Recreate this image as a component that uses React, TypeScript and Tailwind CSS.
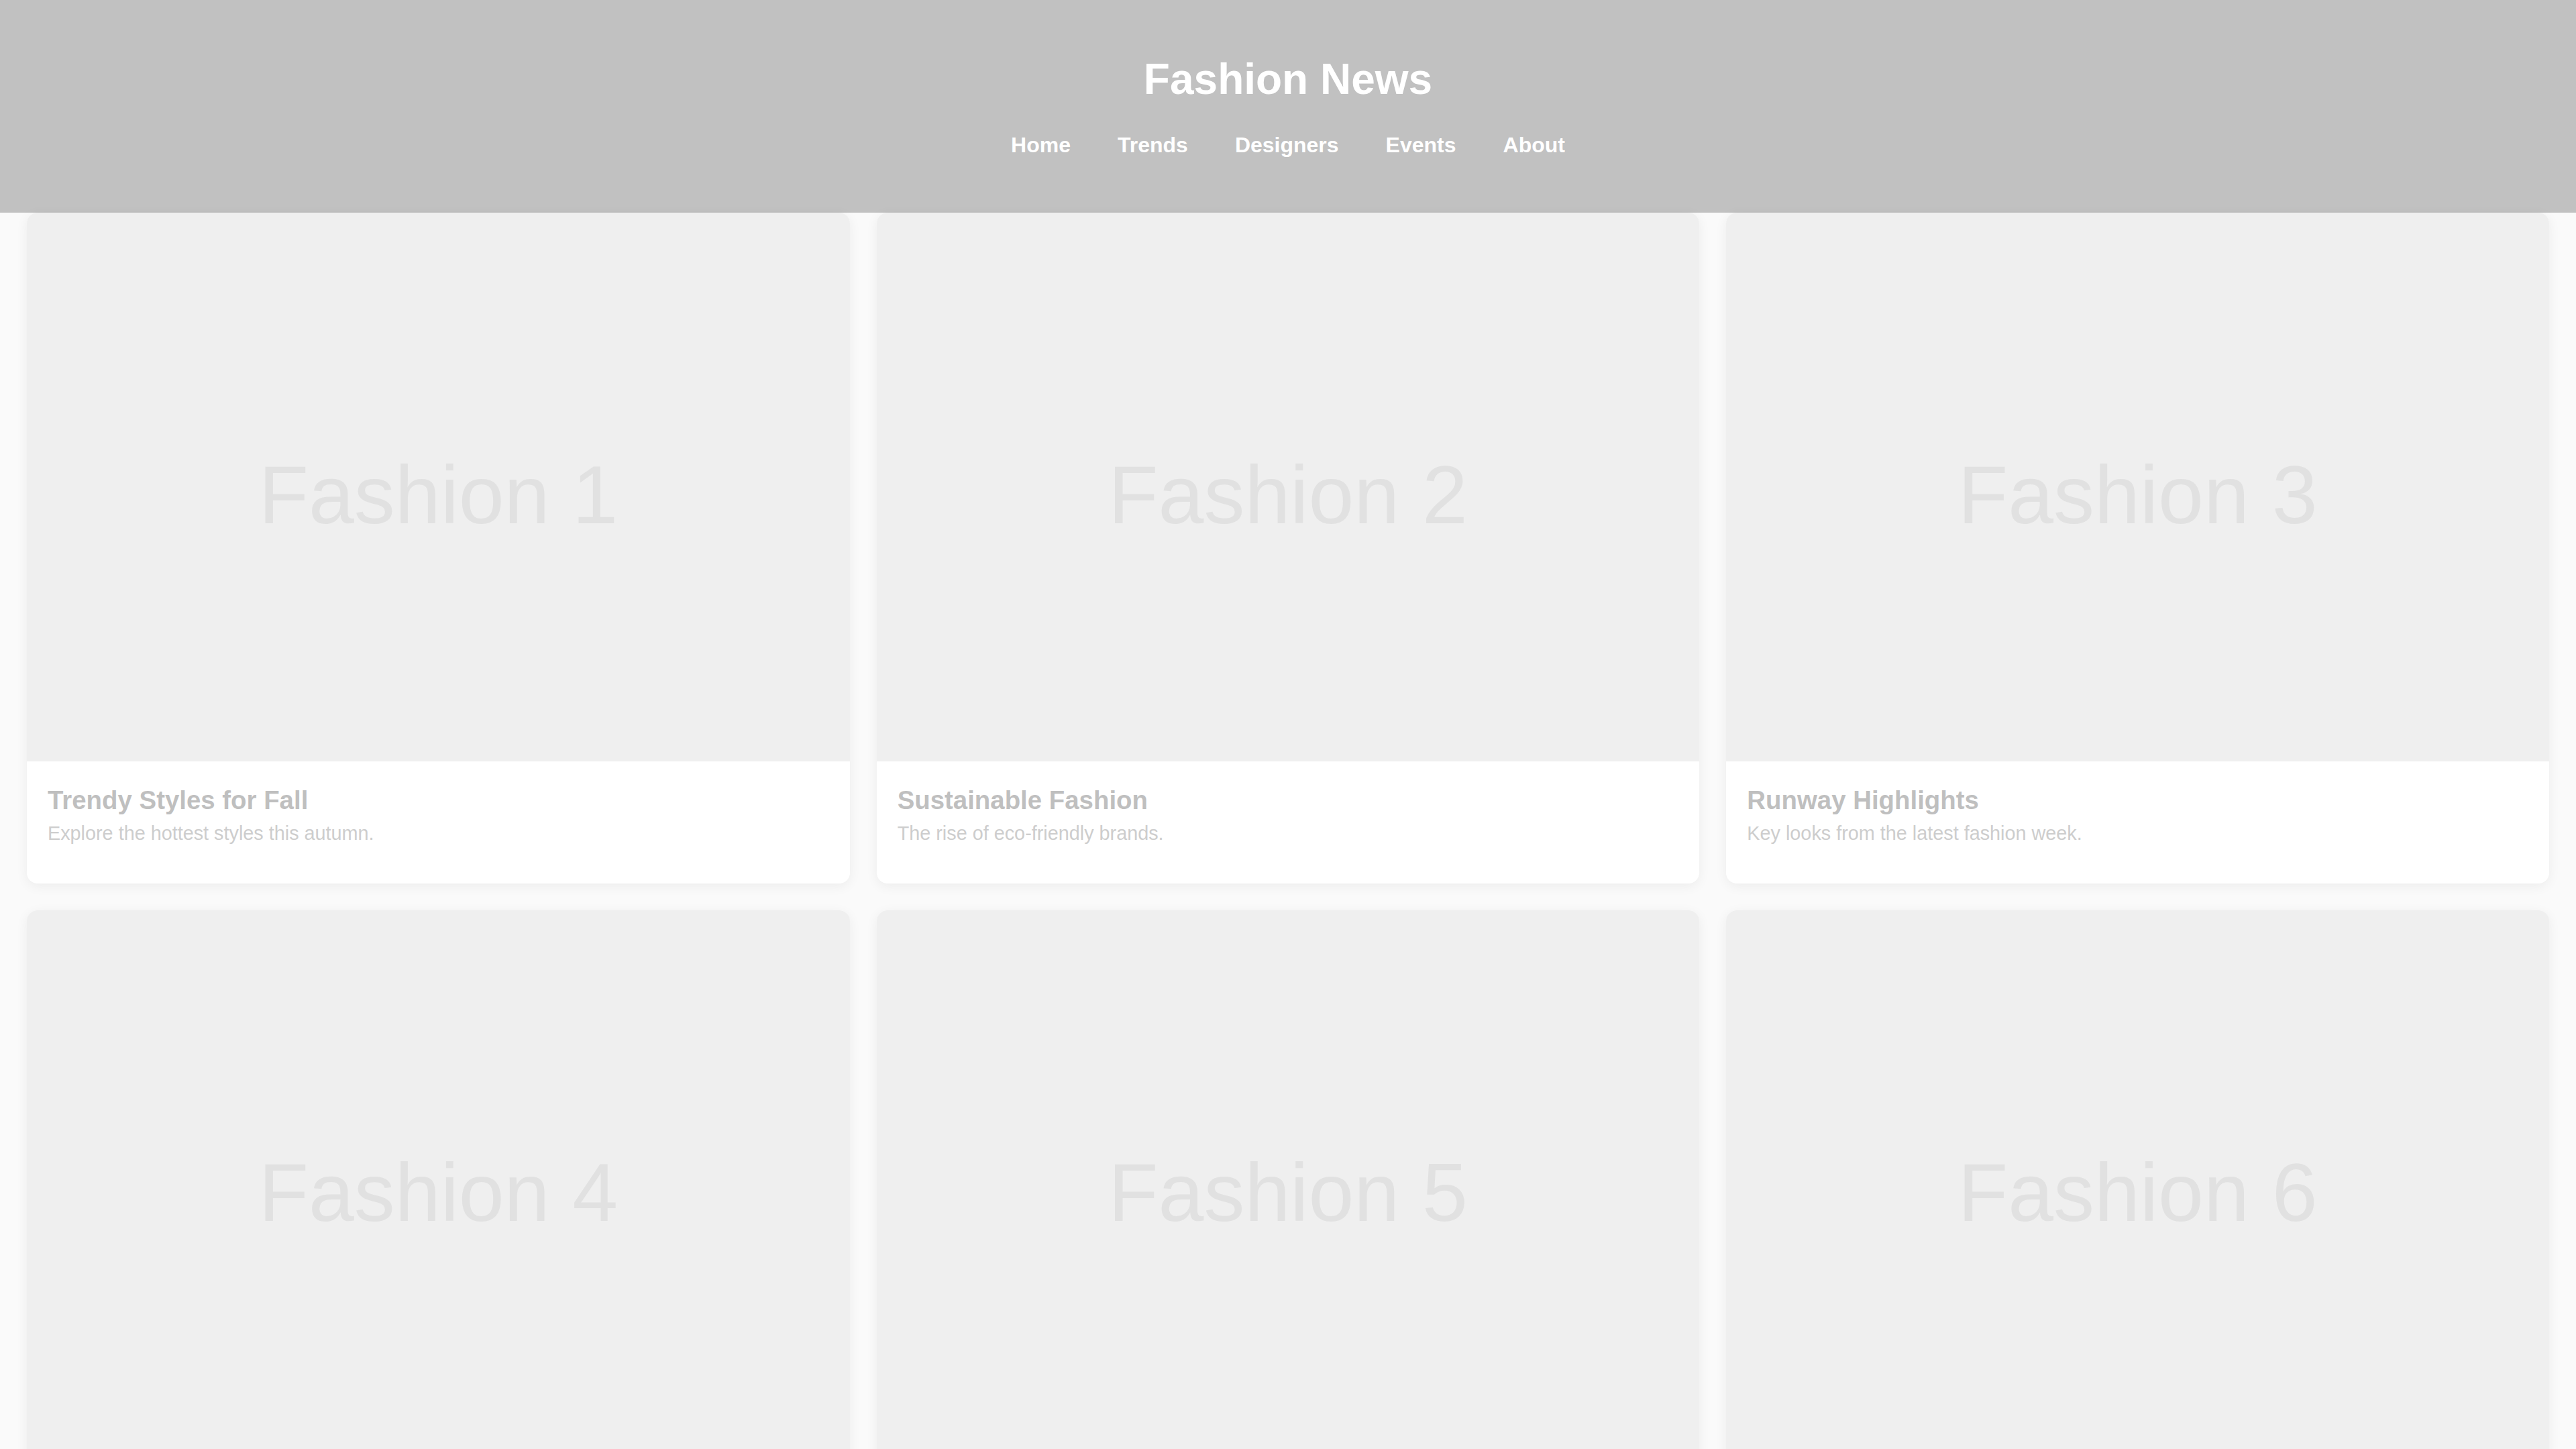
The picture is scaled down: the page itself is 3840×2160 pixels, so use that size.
const articles = [
  { id: 1, title: "Trendy Styles for Fall", blurb: "Explore the hottest styles this autumn." },
  { id: 2, title: "Sustainable Fashion", blurb: "The rise of eco-friendly brands." },
  { id: 3, title: "Runway Highlights", blurb: "Key looks from the latest fashion week." },
  { id: 4, title: "Street Style Report", blurb: "What people are wearing in the city." },
  { id: 5, title: "Designer Spotlight", blurb: "Meet the names shaping the season." },
  { id: 6, title: "Accessory Must-Haves", blurb: "The finishing touches everyone wants." },
];

const navLinks = ["Home", "Trends", "Designers", "Events", "About"];

function ArticleCard({ id, title, blurb }: { id: number; title: string; blurb: string }) {
  return (
    <div className="h-[1000px] rounded-[16px] bg-white shadow-[0_4px_18px_rgba(0,0,0,0.06)] overflow-hidden flex flex-col">
      {/* placeholder image */}
      <div className="h-[818px] shrink-0 bg-[#efefef] flex items-center justify-center pt-[24px]">
        <span className="text-[122px] leading-[1.15] text-[#e1e1e1]">Fashion {id}</span>
      </div>
      <div className="px-[31px] pt-[36px]">
        <h2 className="text-[38.4px] leading-[1.15] font-bold text-[#bfbfbf]">{title}</h2>
        <p className="mt-[11px] text-[28.8px] leading-[1.15] text-[#cdcdcd]">{blurb}</p>
      </div>
    </div>
  );
}

export default function App() {
  return (
    <div className="h-[2160px] overflow-hidden bg-[#fafafa] font-['Liberation_Sans',_Arial,_sans-serif]">
      <header className="h-[317px] bg-[#c1c1c1] pt-[82px] flex flex-col items-center">
        <h1 className="text-[64px] leading-[1.15] font-bold text-white">Fashion News</h1>
        <nav className="mt-[42px] flex gap-[70px]">
          {navLinks.map((link) => (
            <a key={link} href="#" className="text-[32px] leading-[1.15] font-bold text-white">
              {link}
            </a>
          ))}
        </nav>
      </header>

      <main className="grid grid-cols-3 gap-[40px] px-[40px]">
        {articles.map((a) => (
          <ArticleCard key={a.id} {...a} />
        ))}
      </main>
    </div>
  );
}
